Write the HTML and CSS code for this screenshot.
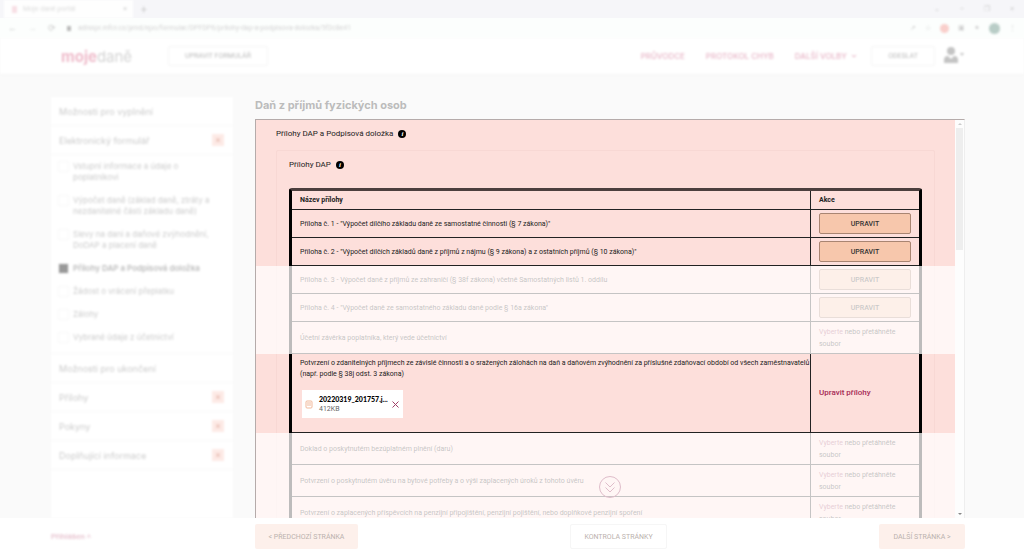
FILE: index.html
```
<!DOCTYPE html>
<html lang="cs">

<head>
    <meta charset="UTF-8">
    <meta name="viewport" content="width=device-width, initial-scale=1.0">
    <title>Moje daně</title>
    <link rel="stylesheet" href="styles.css">
</head>

<body>
    <!-- Browser -->
    <div class="browser">
        <div class="tabs">
            <div class="tab"><span class="favicon"></span><span class="tab-title">Moje daně portál</span><span class="tab-close">×</span></div>
            <span class="tab-new">+</span>
            <div class="window-icons"><span>⌄</span><span>–</span><span>❐</span><span>×</span></div>
        </div>
        <div class="address">
            <span>←</span><span class="faint">→</span><span>⟳</span>
            <div class="url"><span class="lock"></span>adisspr.mfcr.cz/pmd/epo/formular/DPFDP6/prilohy-dap-a-podpisova-dolozka/5f2c8e41</div>
            <div class="tools">
                <span>↗</span><span>☆</span><span class="dot red"></span><span>▣</span><span>✦</span><span class="dot green"></span><span>⋮</span>
            </div>
        </div>
    </div>

    <header class="header">
        <div class="logo"><b>moje</b>daně</div>
        <button class="outline-button">UPRAVIT FORMULÁŘ</button>
        <nav class="nav">
            <a href="#">PRŮVODCE</a>
            <a href="#">PROTOKOL CHYB</a>
            <a href="#">DALŠÍ VOLBY <svg width="6" height="5" viewBox="0 0 6 5"><path d="M1 1l2 2 2-2" /></svg></a>
        </nav>
        <button class="outline-button send">ODESLAT</button>
        <svg class="user" width="22" height="18" viewBox="0 0 22 18">
            <circle cx="8" cy="4" r="4" />
            <path d="M1 16v-3q0-4 4-4l3 3 3-3q4 0 4 4v3z" />
            <path d="M17 6h4l-2 3z" />
        </svg>
    </header>

    <main class="main">
        <aside class="sidebar">
            <div class="side-title">Možnosti pro vyplnění</div>
            <div class="side-title">Elektronický formulář <span class="toggle">×</span></div>
            <div class="steps">
                <label><input type="checkbox"><span>Vstupní informace a údaje o poplatníkovi</span></label>
                <label><input type="checkbox"><span>Výpočet daně (základ daně, ztráty a nezdanitelné části základu daně)</span></label>
                <label><input type="checkbox"><span>Slevy na dani a daňové zvýhodnění, DoDAP a placení daně</span></label>
                <label class="active"><input type="checkbox" checked><span>Přílohy DAP a Podpisová doložka</span></label>
                <label><input type="checkbox"><span>Žádost o vrácení přeplatku</span></label>
                <label><input type="checkbox"><span>Zálohy</span></label>
                <label><input type="checkbox"><span>Vybrané údaje z účetnictví</span></label>
            </div>
            <div class="side-title">Možnosti pro ukončení</div>
            <div class="side-title">Přílohy <span class="toggle">×</span></div>
            <div class="side-title">Pokyny <span class="toggle">×</span></div>
            <div class="side-title">Doplňující informace <span class="toggle">×</span></div>
        </aside>

        <section class="content">
            <h1>Daň z příjmů fyzických osob</h1>
            <div class="panel">
                <div class="pane">
                    <h2>Přílohy DAP a Podpisová doložka <span class="info">i</span></h2>
                    <div class="card">
                        <h3>Přílohy DAP <span class="info">i</span></h3>
                        <table class="attachments">
                            <thead>
                                <tr>
                                    <th>Název přílohy</th>
                                    <th class="action">Akce</th>
                                </tr>
                            </thead>
                            <tbody>
                                <tr>
                                    <td>Příloha č. 1 - "Výpočet dílčího základu daně ze samostatné činnosti (§ 7 zákona)"</td>
                                    <td><button class="edit">UPRAVIT</button></td>
                                </tr>
                                <tr>
                                    <td>Příloha č. 2 - "Výpočet dílčích základů daně z příjmů z nájmu (§ 9 zákona) a z ostatních příjmů (§ 10 zákona)"</td>
                                    <td><button class="edit">UPRAVIT</button></td>
                                </tr>
                                <tr class="dim">
                                    <td>Příloha č. 3 - Výpočet daně z příjmů ze zahraničí (§ 38f zákona) včetně Samostatných listů 1. oddílu</td>
                                    <td><button class="edit">UPRAVIT</button></td>
                                </tr>
                                <tr class="dim">
                                    <td>Příloha č. 4 - "Výpočet daně ze samostatného základu daně podle § 16a zákona"</td>
                                    <td><button class="edit">UPRAVIT</button></td>
                                </tr>
                                <tr class="dim">
                                    <td>Účetní závěrka poplatníka, který vede účetnictví</td>
                                    <td class="upload"><a href="#">Vyberte</a> nebo přetáhněte soubor</td>
                                </tr>
                                <tr class="current">
                                    <td>
                                        Potvrzení o zdanitelných příjmech ze závislé činnosti a o sražených zálohách na daň a daňovém zvýhodnění za příslušné zdaňovací období od všech zaměstnavatelů (např. podle § 38j odst. 3 zákona)
                                        <div class="file">
                                            <svg width="8" height="9" viewBox="0 0 8 9"><rect x="1" y="1" width="6" height="7" rx="1" /><path d="M2 3h4M2 5h4" /></svg>
                                            <div class="file-info">
                                                <div class="file-name">20220319_201757.j...</div>
                                                <div class="file-size">412KB</div>
                                            </div>
                                            <button class="remove" aria-label="Odstranit"><svg width="7" height="7" viewBox="0 0 7 7"><path d="M.5 .5l6 6M6.5 .5l-6 6" /></svg></button>
                                        </div>
                                    </td>
                                    <td><a href="#" class="edit-link">Upravit přílohy</a></td>
                                </tr>
                                <tr class="dim">
                                    <td>Doklad o poskytnutém bezúplatném plnění (daru)</td>
                                    <td class="upload"><a href="#">Vyberte</a> nebo přetáhněte soubor</td>
                                </tr>
                                <tr class="dim">
                                    <td>Potvrzení o poskytnutém úvěru na bytové potřeby a o výši zaplacených úroků z tohoto úvěru</td>
                                    <td class="upload"><a href="#">Vyberte</a> nebo přetáhněte soubor</td>
                                </tr>
                                <tr class="dim">
                                    <td>Potvrzení o zaplacených příspěvcích na penzijní připojištění, penzijní pojištění, nebo doplňkové penzijní spoření</td>
                                    <td class="upload"><a href="#">Vyberte</a> nebo přetáhněte soubor</td>
                                </tr>
                            </tbody>
                        </table>
                    </div>
                </div>
                <div class="scrollbar">
                    <svg width="8" height="8" viewBox="0 0 8 8"><path d="M2 5l2-2 2 2z" /></svg>
                    <div class="track"><div class="thumb"></div></div>
                    <svg class="down" width="8" height="8" viewBox="0 0 8 8"><path d="M2 3l2 2 2-2z" /></svg>
                </div>
                <button class="scroll-down" aria-label="Dolů">
                    <svg width="24" height="24" viewBox="0 0 24 24"><circle cx="12" cy="12" r="10.5" /><path d="M7.500 7.500l4.500 4.500 4.500-4.500M7.500 12.500l4.500 4.500 4.500-4.500" /></svg>
                </button>
            </div>
        </section>
    </main>

    <footer class="footer">
        <a href="#" class="footer-link">Přihlášen ˄</a>
        <div class="footer-buttons">
            <button class="page-button">&lt; PŘEDCHOZÍ STRÁNKA</button>
            <button class="page-button check">KONTROLA STRÁNKY</button>
            <button class="page-button">DALŠÍ STRÁNKA &gt;</button>
        </div>
    </footer>
</body>

</html>
```
FILE: styles.css
```
* {
    box-sizing: border-box;
}

body {
    margin: 0;
    height: 100vh;
    display: flex;
    flex-direction: column;
    overflow: hidden;
    font-family: Roboto, "Liberation Sans", sans-serif;
    font-size: 7px;
    color: #222;
    background-color: #fafafa;
}

button {
    font-family: inherit;
    font-size: 7px;
    padding: 0;
    cursor: pointer;
}

a {
    text-decoration: none;
}

h1,
h2,
h3 {
    margin: 0;
}

/* Browser */
.browser {
    color: #ccc;
    background-color: #fcfefd;
}

.tabs {
    display: flex;
    align-items: center;
    height: 18px;
    padding-left: 4px;
    background-color: #f6f6f9;
}

.tab {
    display: flex;
    align-items: center;
    gap: 6px;
    width: 129px;
    height: 18px;
    padding: 0 6px 0 8px;
    background-color: #fefefe;
    filter: blur(1px);
}

.favicon {
    width: 5px;
    height: 7px;
    background-color: #f8dfe5;
}

.tab-title {
    flex: 1;
    color: #ddd;
}

.tab-new {
    margin-left: 8px;
    font-size: 10px;
    filter: blur(1px);
}

.window-icons {
    display: flex;
    gap: 20px;
    margin-left: auto;
    padding-right: 10px;
    filter: blur(1px);
}

.address {
    display: flex;
    align-items: center;
    gap: 11px;
    height: 20px;
    padding: 0 8px;
    filter: blur(1px);
}

.address > span {
    font-size: 9px;
}

.faint {
    opacity: 0.5;
}

.url {
    display: flex;
    align-items: center;
    gap: 7px;
    flex: 1;
    color: #d4d4d4;
}

.lock {
    width: 4px;
    height: 5px;
    background-color: #bbb;
}

.tools {
    display: flex;
    align-items: center;
    gap: 9px;
}

.dot {
    width: 9px;
    height: 9px;
    border-radius: 50%;
}

.red {
    background-color: #f9cfcb;
}

.green {
    width: 11px;
    height: 11px;
    background-color: #b9cdc7;
}

/* Header */
.header {
    display: flex;
    align-items: center;
    height: 37px;
    padding: 0 59px 0 61px;
    background-color: #fff;
    border-bottom: 1px solid #f6f6f6;
    filter: blur(1px);
}

.logo {
    width: 107px;
    font-family: Inter, sans-serif;
    font-size: 15px;
    color: #d4d4d4;
}

.logo b {
    color: #efbccb;
}

.outline-button {
    width: 100px;
    height: 20px;
    color: #bbb;
    background-color: #fff;
    border: 1px solid #f5f5f5;
    border-radius: 2px;
}

.nav {
    display: flex;
    gap: 21px;
    margin-left: auto;
    margin-right: 14px;
}

.nav a {
    font-family: Inter, sans-serif;
    font-size: 8px;
    font-weight: 500;
    color: #e8b7c8;
}

.nav svg {
    margin-left: 2px;
}

.nav path {
    fill: none;
    stroke: #e3a9bd;
}

.send {
    width: 64px;
    margin-right: 8px;
}

.user {
    fill: #c4c4c4;
}

/* Main */
.main {
    display: flex;
    gap: 22px;
    flex: 1;
    min-height: 0;
    padding: 22px 59px 0 51px;
}

.sidebar {
    flex: 0 0 182px;
    font-family: Inter, sans-serif;
    background-color: #fff;
    filter: blur(1px);
}

.side-title {
    display: flex;
    align-items: center;
    justify-content: space-between;
    height: 29px;
    padding: 0 9px 0 8px;
    font-size: 9px;
    color: #ccc;
    border-bottom: 1px solid #f9f9f9;
}

.toggle {
    width: 12px;
    height: 12px;
    font-size: 9px;
    line-height: 12px;
    text-align: center;
    color: #e3b3a8;
    background-color: #fdeae6;
}

.steps {
    display: flex;
    flex-direction: column;
    gap: 12px;
    padding: 6px 12px 10px 7px;
    border-bottom: 1px solid #f9f9f9;
}

.steps label {
    display: flex;
    align-items: flex-start;
    gap: 4px;
    font-size: 8px;
    line-height: 11px;
    color: #ccc;
}

.steps input {
    flex: none;
    appearance: none;
    width: 11px;
    height: 11px;
    margin: 0;
    border: 1px solid #f8f8f8;
}

.steps .active {
    font-weight: 600;
    color: #bbb;
}

.steps .active input {
    background-color: #999;
}

.content {
    display: flex;
    flex-direction: column;
    flex: 1;
    min-width: 0;
}

h1 {
    height: 22px;
    font-family: Inter, sans-serif;
    font-size: 11px;
    line-height: 16px;
    color: #bcbcbc;
}

.panel {
    position: relative;
    display: flex;
    flex: 1;
    min-height: 0;
    border-left: 1px solid #b5abaa;
    border-top: 1px solid #b5abaa;
    border-right: 1px solid #eee;
}

.pane {
    flex: 1;
    overflow: hidden;
    padding: 7px 20px 0;
    background-color: #fddfdb;
}

h2,
h3 {
    display: flex;
    align-items: center;
    gap: 5px;
    font-size: 8px;
    font-weight: 400;
    line-height: 14px;
}

.info {
    width: 8px;
    height: 8px;
    border-radius: 50%;
    font-family: "Liberation Serif", serif;
    font-size: 7px;
    font-style: italic;
    font-weight: 700;
    line-height: 8px;
    text-align: center;
    color: #fff;
    background-color: #000;
}

.card {
    margin-top: 9px;
    padding: 7px 12px;
    border: 1px solid #f8d8d4;
    border-radius: 2px;
}

/* Attachments */
.attachments {
    width: 100%;
    margin-top: 16px;
    table-layout: fixed;
    border: 3px solid #000;
    border-top-color: #4c3f3e;
    border-radius: 3px;
    border-spacing: 0;
}

th,
td {
    height: 28px;
    padding: 0 0 0 8px;
    text-align: left;
    border-bottom: 1px solid #222;
}

th {
    height: 19px;
}

.action {
    width: 109px;
}

th + th,
td + td {
    padding: 0 8px;
    border-left: 1px solid #222;
}

.edit {
    display: block;
    width: 100%;
    height: 21px;
    font-weight: 500;
    color: #333;
    background-color: #f7c7ac;
    border: 1px solid #a98572;
    border-radius: 2px;
}

.attachments .upload {
    height: 32px;
    line-height: 12px;
}

.upload a {
    color: #9d3f63;
}

/* Pale band over the rows that are out of focus */
.dim {
    position: relative;
}

.dim td:first-child::after {
    content: "";
    position: absolute;
    top: 0;
    right: -40px;
    bottom: 0;
    left: -40px;
    background-color: rgba(255, 254, 253, 0.74);
    pointer-events: none;
}

.current td {
    height: 79px;
    padding-right: 0;
    line-height: 11px;
}

.file {
    display: flex;
    align-items: center;
    gap: 6px;
    width: 101px;
    height: 28px;
    margin: 10px 0 10px 2px;
    padding: 0 4px 0 3px;
    background-color: #fff;
}

.file svg {
    flex: none;
    fill: none;
    stroke: #f1b99b;
}

.file-info {
    flex: 1;
    min-width: 0;
}

.file-name {
    font-family: Lato, sans-serif;
    font-weight: 900;
    line-height: 10px;
    white-space: nowrap;
    color: #000;
}

.file-size {
    line-height: 11px;
    color: #666;
}

.remove {
    display: flex;
    background: none;
    border: none;
}

.file .remove svg {
    stroke: #a04068;
}

.edit-link {
    font-size: 8px;
    font-weight: 500;
    color: #a52a55;
}

.scrollbar {
    display: flex;
    flex-direction: column;
    flex: 0 0 9px;
    align-items: center;
    background-color: #fdfdfd;
}

.scrollbar path {
    fill: #ccc;
}

.scrollbar .down path {
    fill: #888;
}

.track {
    flex: 1;
    width: 7px;
}

.thumb {
    height: 32%;
    background-color: #eee;
}

.scroll-down {
    position: absolute;
    bottom: 19px;
    left: 50%;
    width: 24px;
    height: 24px;
    margin-left: -12px;
    background: none;
    border: none;
}

.scroll-down svg {
    display: block;
    fill: none;
    stroke: #dfbdca;
}

/* Footer */
.footer {
    display: flex;
    gap: 22px;
    height: 37px;
    padding: 6px 59px 0 51px;
    background-color: #fff;
}

.footer-link {
    width: 182px;
    font-size: 8px;
    font-weight: 500;
    line-height: 26px;
    color: #e6bfcc;
    filter: blur(1px);
}

.footer-buttons {
    display: flex;
    justify-content: space-between;
    flex: 1;
}

.page-button {
    width: 103px;
    height: 25px;
    color: #bbb2ae;
    background-color: #fdf0eb;
    border: none;
    border-radius: 2px;
}

.page-button:last-child {
    width: 86px;
}

.page-button.check {
    width: 97px;
    background-color: #fff;
    border: 1px solid #f6f6f6;
}
```
